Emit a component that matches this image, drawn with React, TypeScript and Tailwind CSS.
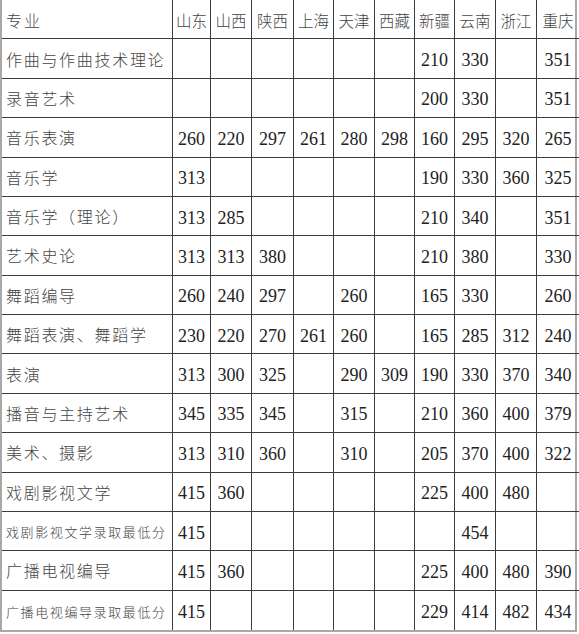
import React from "react";

const provinces = ["山东", "山西", "陕西", "上海", "天津", "西藏", "新疆", "云南", "浙江", "重庆"];

type Row = { name: string; small?: boolean; scores: string[] };

const rows: Row[] = [
  { name: "作曲与作曲技术理论", scores: ["", "", "", "", "", "", "210", "330", "", "351"] },
  { name: "录音艺术", scores: ["", "", "", "", "", "", "200", "330", "", "351"] },
  { name: "音乐表演", scores: ["260", "220", "297", "261", "280", "298", "160", "295", "320", "265"] },
  { name: "音乐学", scores: ["313", "", "", "", "", "", "190", "330", "360", "325"] },
  { name: "音乐学（理论）", scores: ["313", "285", "", "", "", "", "210", "340", "", "351"] },
  { name: "艺术史论", scores: ["313", "313", "380", "", "", "", "210", "380", "", "330"] },
  { name: "舞蹈编导", scores: ["260", "240", "297", "", "260", "", "165", "330", "", "260"] },
  { name: "舞蹈表演、舞蹈学", scores: ["230", "220", "270", "261", "260", "", "165", "285", "312", "240"] },
  { name: "表演", scores: ["313", "300", "325", "", "290", "309", "190", "330", "370", "340"] },
  { name: "播音与主持艺术", scores: ["345", "335", "345", "", "315", "", "210", "360", "400", "379"] },
  { name: "美术、摄影", scores: ["313", "310", "360", "", "310", "", "205", "370", "400", "322"] },
  { name: "戏剧影视文学", scores: ["415", "360", "", "", "", "", "225", "400", "480", ""] },
  { name: "戏剧影视文学录取最低分", small: true, scores: ["415", "", "", "", "", "", "", "454", "", ""] },
  { name: "广播电视编导", scores: ["415", "360", "", "", "", "", "225", "400", "480", "390"] },
  { name: "广播电视编导录取最低分", small: true, scores: ["415", "", "", "", "", "", "229", "414", "482", "434"] },
];

const font = { fontFamily: '"Liberation Serif", "Noto Sans CJK SC", serif' };

const App = () => {
  return (
    <div className="w-[579px] h-[634px] bg-white" style={font}>
      <div className="grid grid-cols-[171px_38px_41px_42px_40px_41px_40px_40px_41px_41px_42px] grid-rows-[repeat(16,minmax(0,1fr))] h-[632px] w-[577px] border-l-2 border-b-2 border-r-2 border-[#a8a8a8]">
        <div className="flex items-center pl-[4px] pt-[5px] border-r border-b border-[#3c3c3c] text-[16px] tracking-[2px] font-light text-[#444]">
          专业
        </div>
        {provinces.map((p, i) => (
          <div
            key={p}
            className={`flex items-center justify-center pt-[5px] border-b border-[#3c3c3c] text-[15.5px] font-light whitespace-nowrap text-[#444] ${i < 9 ? "border-r" : ""}`}
          >
            {p}
          </div>
        ))}
        {rows.map((row, r) => (
          <React.Fragment key={row.name}>
            <div
              className={`flex items-center pl-[4px] pt-[4px] border-r border-[#3c3c3c] whitespace-nowrap font-light text-[#444] ${r < rows.length - 1 ? "border-b" : ""} ${row.small ? "text-[13px] tracking-[1.6px]" : "text-[16px] tracking-[1.7px]"}`}
            >
              {row.name}
            </div>
            {row.scores.map((s, c) => (
              <div
                key={c}
                className={`flex items-center justify-center pt-[4px] border-[#3c3c3c] text-[18px] text-[#222] ${c < 9 ? "border-r" : ""} ${r < rows.length - 1 ? "border-b" : ""}`}
              >
                {s}
              </div>
            ))}
          </React.Fragment>
        ))}
      </div>
    </div>
  );
};

export default App;
